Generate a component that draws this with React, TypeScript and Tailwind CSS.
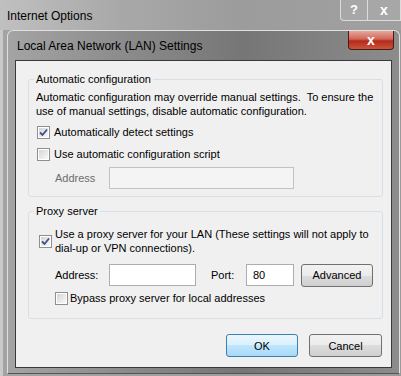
import React from "react";

const font = "font-['Liberation_Sans',Arial,sans-serif]";

function Check({ checked }: { checked?: boolean }) {
  return (
    <div className="w-[13px] h-[13px] shrink-0 border border-[#8e8f8f] bg-white p-px">
      <div className="w-full h-full bg-[linear-gradient(135deg,#d6d6d6,#f8f8f8)] flex items-center justify-center">
        {checked && (
          <svg width="9" height="9" viewBox="0 0 9 9">
            <path d="M1 4.5 L3.5 7 L8 1.5" fill="none" stroke="#3d4f8c" strokeWidth="1.8" />
          </svg>
        )}
      </div>
    </div>
  );
}

function Btn({ children, def, w }: { children: React.ReactNode; def?: boolean; w: string }) {
  return (
    <div
      className={`${w} h-[23px] rounded-[3px] border flex items-center justify-center text-black ${
        def
          ? "border-[#3c7fb1] bg-[linear-gradient(to_bottom,#eaf6fd_0%,#d9f0fc_50%,#bee6fd_50%,#a7d9f5_100%)]"
          : "border-[#707070] bg-[linear-gradient(to_bottom,#f2f2f2_0%,#ebebeb_50%,#dddddd_50%,#cfcfcf_100%)]"
      }`}
    >
      {children}
    </div>
  );
}

export default function App() {
  return (
    <div className={`w-[401px] h-[376px] overflow-hidden text-[11px] leading-[14px] whitespace-nowrap bg-[linear-gradient(to_right,#c9c9c9_0px,#c9c9c9_3px,#a3a3a3_3px,#a3a3a3_7px,#9a9a9a_100%)] ${font}`}>
      {/* outer window caption */}
      <div className="h-[30px] flex bg-[linear-gradient(to_right,#c0c0c0,#a8a8a8_30%,#9c9c9c_60%,#a0a0a0)]">
        <div className="pl-[7px] pt-[9px] text-[12px] text-black">Internet Options</div>
        <div className="ml-auto flex h-[21px]">
          <div className="w-[28px] border border-t-0 border-[#dcdcdc] rounded-bl-[4px] bg-[#a7a7a7] flex items-center justify-center text-white font-bold text-[13px]">
            ?
          </div>
          <div className="w-[33px] border border-t-0 border-l-0 border-[#dcdcdc] bg-[#a7a7a7] flex items-center justify-center text-white font-bold text-[14px]">
            x
          </div>
        </div>
      </div>

      {/* LAN settings dialog */}
      <div className="ml-[7px] mr-[1px] h-[344px] rounded-t-[6px] border border-[#e0e0e0] border-b-[#555] flex flex-col bg-[linear-gradient(to_right,#a4a4a4,#8b8b8b_30%,#767676_60%,#8c8c8c)]">
        <div className="h-[29px] flex items-start">
          <div className="pl-[9px] pt-[8px] text-[12px] text-black">Local Area Network (LAN) Settings</div>
          <div className="ml-auto mr-[5px] w-[46px] h-[19px] rounded-b-[4px] border border-t-0 border-[#4c1a12] bg-[linear-gradient(to_bottom,#e6a799_0%,#d0665a_45%,#b52a18_55%,#c9553e_100%)] flex items-center justify-center text-white font-bold text-[14px] leading-none">
            x
          </div>
        </div>

        {/* client area */}
        <div className="mx-[7px] h-[308px] border border-[#3a3a3a] bg-[#f0f0f0] pl-[12px] pr-[8px] text-black">
          <fieldset className="mt-[11px] border border-[#d5dfe5] rounded-[3px] pb-[7px]">
            <legend className="ml-[5px] px-[2px]">Automatic configuration</legend>
            <p className="mt-[4px] pl-[7px]">
              Automatic configuration may override manual settings.&nbsp; To ensure the
              <br />
              use of manual settings, disable automatic configuration.
            </p>
            <div className="mt-[6px] pl-[8px] h-[16px] flex items-center gap-[4px]">
              <Check checked />
              <span>Automatically detect settings</span>
            </div>
            <div className="mt-[6px] pl-[8px] h-[16px] flex items-center gap-[4px]">
              <Check />
              <span>Use automatic configuration script</span>
            </div>
            <div className="mt-[5px] h-[22px] flex items-center">
              <span className="w-[80px] pl-[26px] text-[#6d6d6d]">Address</span>
              <div className="w-[185px] h-[22px] border border-[#c2c2c2] bg-[#f4f4f4]" />
            </div>
          </fieldset>

          <fieldset className="mt-[7px] border border-[#d5dfe5] rounded-[3px] pb-[12px]">
            <legend className="ml-[5px] px-[2px]">Proxy server</legend>
            <div className="mt-[9px] pl-[10px] flex items-center gap-[3px]">
              <Check checked />
              <span>
                Use a proxy server for your LAN (These settings will not apply to
                <br />
                dial-up or VPN connections).
              </span>
            </div>
            <div className="mt-[9px] h-[22px] flex items-center">
              <span className="w-[80px] pl-[26px]">Address:</span>
              <div className="w-[87px] h-[22px] border border-[#abadb3] bg-white" />
              <span className="ml-[15px] w-[35px]">Port:</span>
              <div className="w-[48px] h-[22px] border border-[#abadb3] bg-white pl-[6px] leading-[20px]">80</div>
              <div className="ml-[7px]">
                <Btn w="w-[72px]">Advanced</Btn>
              </div>
            </div>
            <div className="mt-[4px] pl-[26px] h-[16px] flex items-center gap-[2px]">
              <Check />
              <span>Bypass proxy server for local addresses</span>
            </div>
          </fieldset>

          <div className="mt-[15px] flex justify-end gap-[11px] pr-[1px]">
            <Btn def w="w-[72px]">OK</Btn>
            <Btn w="w-[73px]">Cancel</Btn>
          </div>
        </div>
      </div>
    </div>
  );
}
